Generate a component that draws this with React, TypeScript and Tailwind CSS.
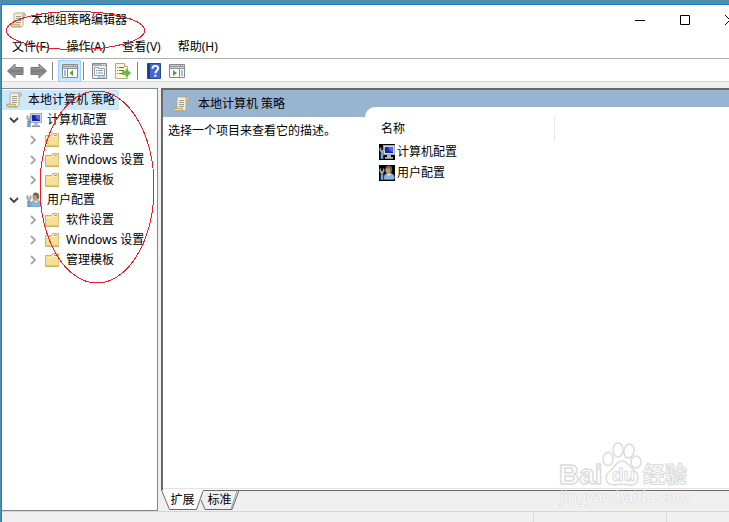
import React, { useState } from "react";

function ScrollIcon() {
  return (
    <svg width="16" height="16" viewBox="0 0 16 16" className="shrink-0" aria-hidden="true">
      <path d="M4 1.5C5 .8 6 1 7 1h6.500c1.200 0 1.800.7 1.800 1.800S14.500 4.500 13.500 4.500H13V12c0 2-.8 3-2.200 3H2.500C1.200 15 .7 14.200.7 13.200S1.300 12 2.200 12H4z" fill="#f7efd3" stroke="#b3a67e" strokeWidth=".9" />
      <path d="M1 12.300h8.500c0 1.600.5 2.400 1.300 2.400H2.500C1.500 14.700 1 14 1 12.300z" fill="#e9d9a6" stroke="#b09c64" strokeWidth=".8" />
      <path d="M12.600 4.200V2.700c0-.9.500-1.500 1.200-1.500s1.400.7 1.400 1.600-.6 1.500-1.400 1.500z" fill="#e6d5a1" stroke="#b09c64" strokeWidth=".7" />
      <path d="M6 4.500h5M6 6.500h5M6 8.500h5M6 10.500h5" stroke="#9c9a94" />
    </svg>
  );
}

function FolderIcon() {
  return (
    <svg width="16" height="16" viewBox="0 0 16 16" className="shrink-0" aria-hidden="true">
      <path d="M1.500 14.500V3.500h6l1-2h6v13z" fill="#efd78b" stroke="#d3b25c" />
      <path d="M9 2.500h5v2H8z" fill="#fbf3d2" />
      <path d="M10 3.500h3" stroke="#83b174" />
      <path d="M2 5.500h12.500V14H2z" fill="#f6df98" />
      <path d="M2 5.500h5l1-1h6" fill="none" stroke="#fff3c5" />
      <path d="M2 13.500h12.500" stroke="#e3c36c" />
    </svg>
  );
}

function Wrench() {
  return (
    <>
      <path d="M.8 4v2.500L2 8v2h2V8l1.200-1.500V4L4 3.500v2.300L3 6.500l-1-.7V3.500z" fill="#b4bac0" stroke="#737b84" strokeWidth=".5" />
      <path d="M1.500 9.500h3V15h-3z" fill="#2f6da6" />
      <path d="M3 10v4.500" stroke="#b9daf2" />
    </>
  );
}

function ComputerIcon({ dark = false }: { dark?: boolean }) {
  return (
    <svg width="16" height="16" viewBox="0 0 16 16" className="shrink-0" aria-hidden="true">
      {dark && <path d="M0 0h16v16H0z" fill="#000" />}
      <path d="M4 1h12v10H4z" fill="#d3d6dc" />
      <path d="M4.500 1.500h11v9h-11z" fill="none" stroke="#a5a9b3" />
      <path d="M6 3h8v6H6z" fill="#1424bd" />
      <path d="M9 3h5v5C11 8 9.500 6 9 3z" fill="#4a66e2" />
      <path d="M8 11h4v2h2v1.500H6V13h2z" fill="#b8bbc2" />
      <path d="M6 14.500h8" stroke="#8b8f98" />
      <Wrench />
    </svg>
  );
}

function UserIcon({ dark = false }: { dark?: boolean }) {
  return (
    <svg width="16" height="16" viewBox="0 0 16 16" className="shrink-0" aria-hidden="true">
      {dark && <path d="M0 0h16v16H0z" fill="#000" />}
      <path d="M5 14.500v-3C5.500 9.500 7 8.300 10 8.300c3.500 0 5 1.500 5.500 4l-.7 2.200z" fill="#86b6dc" stroke="#5b87ad" strokeWidth=".6" />
      <path d="M7.800 8.500l2 2.500 2.700-2.500" fill="#e3f0f8" />
      <ellipse cx="9.300" cy="5" rx="2.900" ry="3.800" fill="#c29870" />
      <path d="M6.800 3C7.500.8 8.700.4 10 .6c2.800.2 4.200 3.200 2.400 7.200L11 6l-.3-2.500C9.400 3.800 8 3.400 6.800 3z" fill="#6a6762" />
      <Wrench />
    </svg>
  );
}

function ArrowIcon({ right = false }: { right?: boolean }) {
  return (
    <svg width="17" height="16" viewBox="0 0 17 16" className="shrink-0" aria-hidden="true">
      <defs>
        <linearGradient id="arrowFill" x1="0" y1="0" x2="0" y2="1">
          <stop offset="0" stopColor="#c4c4c4" />
          <stop offset=".5" stopColor="#7b7b7b" />
          <stop offset="1" stopColor="#b0b0b0" />
        </linearGradient>
      </defs>
      <path
        d={right ? "M16.500 8L9 1v3.500H1v7h8V15z" : "M.5 8L8 1v3.500h8v7H8V15z"}
        fill="url(#arrowFill)" stroke="#747474" strokeLinejoin="round"
      />
    </svg>
  );
}

function PaneIcon({ right = false }: { right?: boolean }) {
  return (
    <svg width="16" height="14" viewBox="0 0 16 14" className="shrink-0" aria-hidden="true">
      <path d="M.5.500h15v13H.5z" fill="#fff" stroke="#87898c" />
      <path d="M1 1h14v4H1z" fill="#909397" />
      <path d="M1 1.500h10" stroke="#c7cacd" />
      <path d="M12 1.500h1M14 1.500h1" stroke="#fff" />
      <path d="M1 3.500h14" stroke="#d2d5d7" />
      {right ? (
        <>
          <path d="M10.500 5v8" stroke="#87898c" />
          <path d="M12 7h2M12 9h2M12 11h2" stroke="#3f83c4" />
          <path d="M4 6l4 3-4 3z" fill="#44a929" />
        </>
      ) : (
        <>
          <path d="M5.500 5v8" stroke="#87898c" />
          <path d="M2 7h2M2 9h2M2 11h2" stroke="#3f83c4" />
          <path d="M11 6L7.500 9l3.500 3z" fill="#44a929" />
        </>
      )}
    </svg>
  );
}

function PropertiesIcon() {
  return (
    <svg width="15" height="16" viewBox="0 0 15 16" aria-hidden="true">
      <path d="M.5.500h14v15H.5z" fill="#eef0f1" stroke="#85898d" />
      <path d="M1 2h13" stroke="#a9aeb3" strokeWidth="2" />
      <path d="M10 1.500h1M12 1.500h1" stroke="#fff" />
      <path d="M2.500 4.500h4v1h6v7h-10z" fill="#fff" stroke="#9aa0a5" />
      <path d="M4 7.500h1M4 10h1" stroke="#3f9fd4" />
      <path d="M6 7.500h5M6 10h5" stroke="#8a9298" />
      <path d="M6 14h3" stroke="#35b6e4" />
      <path d="M10 14h3" stroke="#a2a8ac" />
    </svg>
  );
}

function ExportIcon() {
  return (
    <svg width="16" height="16" viewBox="0 0 16 16" aria-hidden="true">
      <path d="M.500.500h9l3 3v12H.5z" fill="#fff9d6" stroke="#b9ae83" />
      <path d="M9.500.500v3h3" fill="#fff" stroke="#b9ae83" />
      <path d="M2 4.500h1M2 7.500h1M2 10.500h1M4 4.500h5M4 7.500h5M4 10.500h4" stroke="#6b6e7b" />
      <path d="M7.500 8.500H11V6l4.700 4-4.700 4v-2.500H7.500z" fill="#5cc13b" stroke="#6ab04f" strokeWidth=".7" />
    </svg>
  );
}

function HelpIcon() {
  return (
    <svg width="14" height="16" viewBox="0 0 14 16" aria-hidden="true">
      <path d="M.500.500h13v15H.5z" fill="#4169cf" stroke="#2b4798" />
      <path d="M1 1h2v14H1z" fill="#203b8d" />
      <path d="M5.500 5.800C5.500 2 11.200 2 11.200 5.300c0 2.400-2.900 2.400-2.900 5" fill="none" stroke="#fff" strokeWidth="1.900" />
      <path d="M7.300 11.800h2v2h-2z" fill="#fff" />
    </svg>
  );
}

function Chevron({ open }: { open: boolean }) {
  return open ? (
    <svg width="10" height="10" viewBox="0 0 10 10" aria-hidden="true">
      <path d="M1 3l4 4 4-4" fill="none" stroke="#404040" strokeWidth="1.800" />
    </svg>
  ) : (
    <svg width="10" height="10" viewBox="0 0 10 10" aria-hidden="true">
      <path d="M3 1l4 4-4 4" fill="none" stroke="#a6a6a6" strokeWidth="1.800" />
    </svg>
  );
}

function Branch({ label, icon }: { label: string; icon: React.ReactNode }) {
  const [open, setOpen] = useState(true);
  return (
    <li>
      <div className="flex h-5 items-center">
        <button className="mr-1.5 ml-1.5 flex w-3 justify-center" aria-label={label} aria-expanded={open} onClick={() => setOpen(!open)}>
          <Chevron open={open} />
        </button>
        {icon}
        <button className="ml-[5px] whitespace-nowrap">{label}</button>
      </div>
      {open && (
        <ul>
          {["软件设置", "Windows 设置", "管理模板"].map((name) => (
            <li key={name} className="flex h-5 items-center">
              <button className="mr-[5px] ml-[25px] flex w-3 justify-center" aria-label={name} aria-expanded={false}>
                <Chevron open={false} />
              </button>
              <FolderIcon />
              <button className="ml-1.5 whitespace-nowrap">{name}</button>
            </li>
          ))}
        </ul>
      )}
    </li>
  );
}

function Divider() {
  return <div className="h-[18px] w-px bg-[#858585]" />;
}

function Watermark() {
  return (
    <svg className="pointer-events-none absolute right-[39px] bottom-[15px]" width="134" height="66" viewBox="0 0 134 66" aria-hidden="true">
      <g fill="#fff" stroke="#dcdcdc" strokeWidth="1.500">
        <ellipse cx="52" cy="18" rx="5" ry="6.500" />
        <ellipse cx="62" cy="9" rx="5" ry="7" />
        <ellipse cx="73" cy="10" rx="5" ry="7" transform="rotate(12 73 10)" />
        <ellipse cx="80" cy="21" rx="5" ry="6" />
        <path d="M66 20c-5 0-7 6-12 10-6 5-5 14 4 14 3 0 5-1 8-1s6 1 9 1c8 0 9-9 4-14-5-4-8-10-13-10z" />
        <text x="3" y="43" fontSize="28" className="font-['Liberation_Sans',sans-serif] font-bold">Bai</text>
        <text x="56" y="40" fontSize="19" strokeWidth="1" className="font-['Liberation_Sans',sans-serif] font-bold">du</text>
        <text x="87" y="41" fontSize="22" strokeWidth="1.200" className="font-['Noto_Sans_CJK_SC',sans-serif] font-bold">经验</text>
      </g>
      <text x="4" y="61" fontSize="15" fill="#fafafa" stroke="#d9d9d9" strokeWidth="1.200" paintOrder="stroke" className="font-['Noto_Sans',sans-serif]">jingyan.baidu.com</text>
    </svg>
  );
}

export default function App() {
  return (
    <div className="relative flex h-screen flex-col overflow-hidden bg-[#4b8fad] pt-1 pl-px font-['Noto_Sans','Noto_Sans_CJK_SC',sans-serif] text-xs leading-5 text-black">
      <div className="flex min-h-0 flex-1 flex-col border-t border-l border-[#1b7fd0] bg-[#f0f0f0]">
        <header className="bg-white">
          <div className="flex h-[30px] items-center pl-2">
            <ScrollIcon />
            <h1 className="ml-[5px] flex-1">本地组策略编辑器</h1>
            <div className="-mr-[23px] flex h-7 shrink-0">
              <button className="flex w-[45px] items-center justify-center" aria-label="最小化">
                <svg width="10" height="10" viewBox="0 0 10 10"><path d="M0 5.500h10" stroke="#000" /></svg>
              </button>
              <button className="flex w-[45px] items-center justify-center" aria-label="最大化">
                <svg width="10" height="10" viewBox="0 0 10 10"><path d="M.5.500h9v9h-9z" fill="none" stroke="#000" /></svg>
              </button>
              <button className="flex w-[45px] items-center justify-center" aria-label="关闭">
                <svg width="10" height="10" viewBox="0 0 10 10"><path d="M0 0l10 10M10 0L0 10" stroke="#000" /></svg>
              </button>
            </div>
          </div>
          <nav className="flex h-[23px] items-center gap-[17px] pl-2.5">
            {["文件(F)", "操作(A)", "查看(V)", "帮助(H)"].map((item) => (
              <button key={item} className="whitespace-nowrap">{item}</button>
            ))}
          </nav>
          <div className="flex h-6 items-center border-y border-t-[#adadad] border-b-[#d9d9d9] pt-0.5 pl-[5px]" role="toolbar">
            <button aria-label="后退"><ArrowIcon /></button>
            <button className="mr-[5px] ml-1.5" aria-label="前进"><ArrowIcon right /></button>
            <Divider />
            <button className="mr-0.5 ml-[5px] flex h-[22px] w-[23px] items-center justify-center border border-[#99d1ff] bg-[#cce8ff]" aria-label="显示/隐藏控制台树"><PaneIcon /></button>
            <Divider />
            <button className="ml-2" aria-label="属性"><PropertiesIcon /></button>
            <button className="mr-1.5 ml-2" aria-label="导出列表"><ExportIcon /></button>
            <Divider />
            <button className="mr-2 ml-[9px]" aria-label="帮助"><HelpIcon /></button>
            <button aria-label="显示/隐藏操作窗格"><PaneIcon right /></button>
          </div>
        </header>

        <main className="flex min-h-0 flex-1 pt-1.5">
          <nav className="w-[156px] shrink-0 overflow-hidden border border-l-0 border-[#828790] bg-white pt-px">
            <div className="flex h-5 items-center">
              <button className="flex h-5 items-center gap-1.5 bg-[#cce8ff] pr-1 pl-1 whitespace-nowrap">
                <ScrollIcon />
                <span>本地计算机 策略</span>
              </button>
            </div>
            <ul>
              <Branch label="计算机配置" icon={<ComputerIcon />} />
              <Branch label="用户配置" icon={<UserIcon />} />
            </ul>
          </nav>

          <section className="ml-[3px] flex min-w-0 flex-1 flex-col">
            <div className="flex min-h-0 flex-1 flex-col border-t-2 border-l-2 border-[#696969] bg-white">
              <div className="flex flex-1 bg-[#99b4d1]">
                <div className="flex w-[202px] shrink-0 flex-col">
                  <div className="flex h-[27px] items-center gap-[9px] pl-2.5">
                    <ScrollIcon />
                    <h2>本地计算机 策略</h2>
                  </div>
                  <p className="flex-1 bg-white pt-1 pl-[5px]">选择一个项目来查看它的描述。</p>
                </div>
                <div className="mt-[17px] flex-1 rounded-tl-[10px] bg-white pt-[10px] pl-3.5">
                  <table className="border-collapse text-left">
                    <thead>
                      <tr><th className="h-6 w-[175px] border-r border-[#e5e5e5] p-0 pl-0.5 font-normal">名称</th></tr>
                    </thead>
                    <tbody>
                      <tr><td className="h-[21px] p-0"><span className="flex items-center gap-0.5"><ComputerIcon dark />计算机配置</span></td></tr>
                      <tr><td className="h-[21px] p-0"><span className="flex items-center gap-0.5"><UserIcon dark />用户配置</span></td></tr>
                    </tbody>
                  </table>
                </div>
              </div>
              <div className="h-0.5 border-t border-[#e3e3e3]" />
            </div>
            <div className="flex h-[21px]" role="tablist">
              <button role="tab" aria-selected="true" className="relative h-5 w-[39px] shrink-0">
                <svg className="absolute inset-0" width="42" height="20" viewBox="0 0 42 20" aria-hidden="true">
                  <path d="M0 0l8 19.500h27L42 0" fill="#fff" />
                  <path d="M.500 0l8 19.500h27L42 1" fill="none" stroke="#696969" />
                </svg>
                <span className="relative pl-1">扩展</span>
              </button>
              <button role="tab" aria-selected="false" className="relative h-5 w-[39px] shrink-0">
                <svg className="absolute inset-0" width="39" height="20" viewBox="0 0 39 20" aria-hidden="true">
                  <path d="M3 .500h36L32 19.500H5L1 10" fill="none" stroke="#696969" />
                  <path d="M37 1l-6 18" stroke="#a0a0a0" />
                </svg>
                <span className="relative">标准</span>
              </button>
              <div className="flex-1 border-t border-[#696969]" />
            </div>
          </section>
        </main>

        <footer className="flex h-[11px] shrink-0 border-t border-[#d7d7d7] pt-px">
          <div className="flex-1" />
          <div className="w-[133px] border-l border-[#d7d7d7]" />
          <div className="w-[63px] border-l border-[#d7d7d7]" />
        </footer>
      </div>

      <Watermark />
      <svg className="pointer-events-none absolute top-0 left-0" width="160" height="290" viewBox="0 0 160 290" fill="none" stroke="#ed1c24" shapeRendering="crispEdges" aria-hidden="true">
        <ellipse cx="75.500" cy="30.500" rx="69" ry="19" />
        <ellipse cx="97" cy="187" rx="57" ry="96" />
      </svg>
    </div>
  );
}
